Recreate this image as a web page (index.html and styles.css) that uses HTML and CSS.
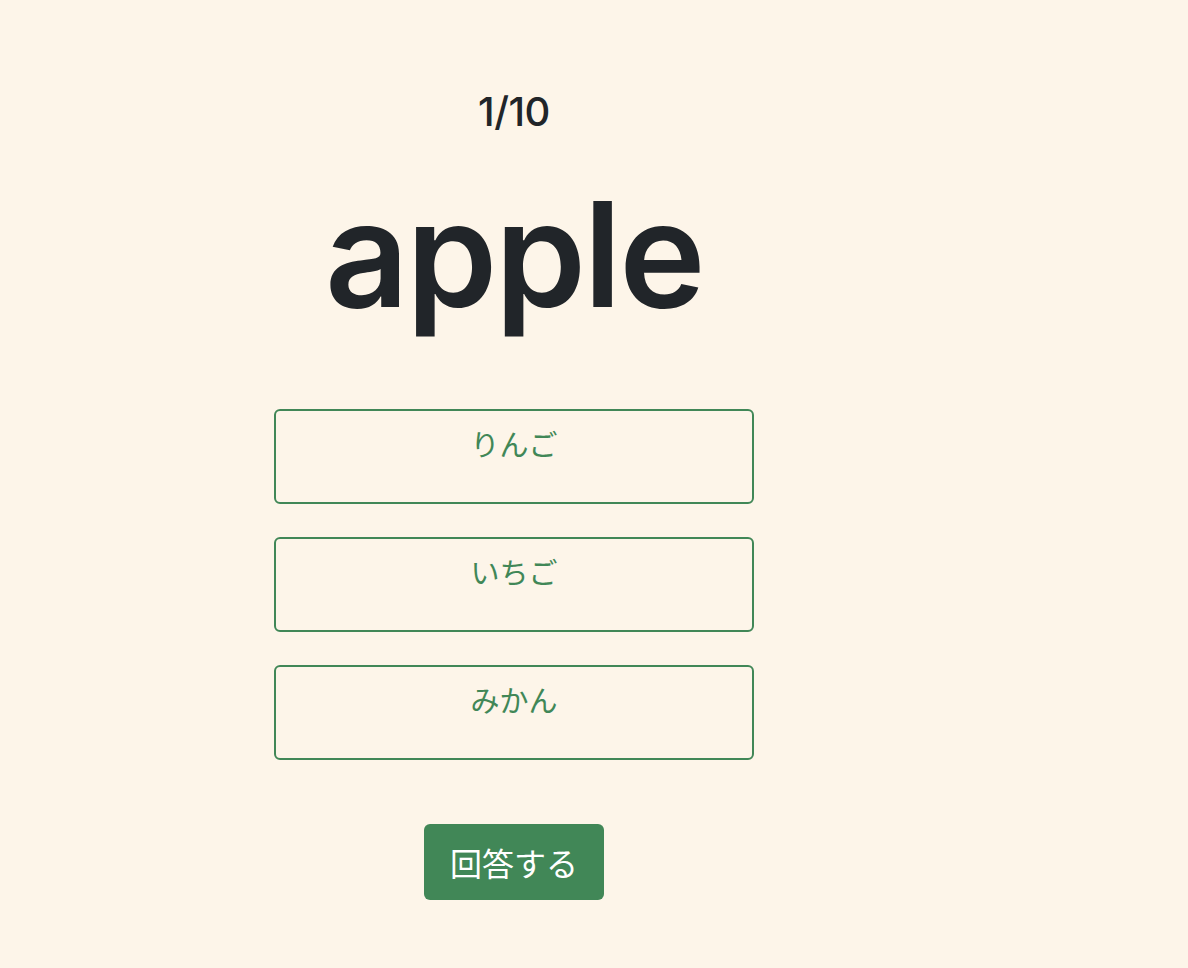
FILE: index.html
```html
<!DOCTYPE html>
<html lang="ja">
<head>
<meta charset="utf-8">
<title>Quiz</title>
<link rel="stylesheet" href="styles.css">
</head>
<body>
<main class="quiz">
  <div class="progress">1/10</div>
  <h1 class="word">apple</h1>
  <div class="options">
    <button class="option" type="button">りんご</button>
    <button class="option" type="button">いちご</button>
    <button class="option" type="button">みかん</button>
  </div>
  <button class="submit" type="button">回答する</button>
</main>
</body>
</html>
```
FILE: styles.css
```css
html, body {
  margin: 0;
  padding: 0;
  background: #fdf5e9;
}
body {
  font-family: Inter, "Noto Sans CJK JP", sans-serif;
  color: #212529;
}
.quiz {
  width: 480px;
  margin-left: 274px;
  padding-top: 88px;
  display: flex;
  flex-direction: column;
  align-items: center;
}
.progress {
  font-size: 40px;
  font-weight: 500;
  line-height: 48px;
  letter-spacing: -0.5px;
}
.word {
  margin: 23px 0 0;
  font-size: 146px;
  font-weight: 600;
  line-height: 190px;
  letter-spacing: -2.5px;
}
.options {
  margin-top: 60px;
  width: 100%;
  display: flex;
  flex-direction: column;
  gap: 33px;
}
.option {
  box-sizing: border-box;
  width: 100%;
  height: 95px;
  padding: 12px 0 0;
  display: flex;
  justify-content: center;
  align-items: flex-start;
  background: transparent;
  border: 2px solid #418757;
  border-radius: 6px;
  color: #418757;
  font-family: "Noto Sans CJK JP", sans-serif;
  font-size: 29px;
  line-height: 40px;
}
.submit {
  margin-top: 64px;
  padding: 0 26px;
  height: 76px;
  background: #418757;
  border: none;
  border-radius: 6px;
  color: #fff;
  font-family: "Noto Sans CJK JP", sans-serif;
  font-size: 32px;
  line-height: 44px;
}
```
